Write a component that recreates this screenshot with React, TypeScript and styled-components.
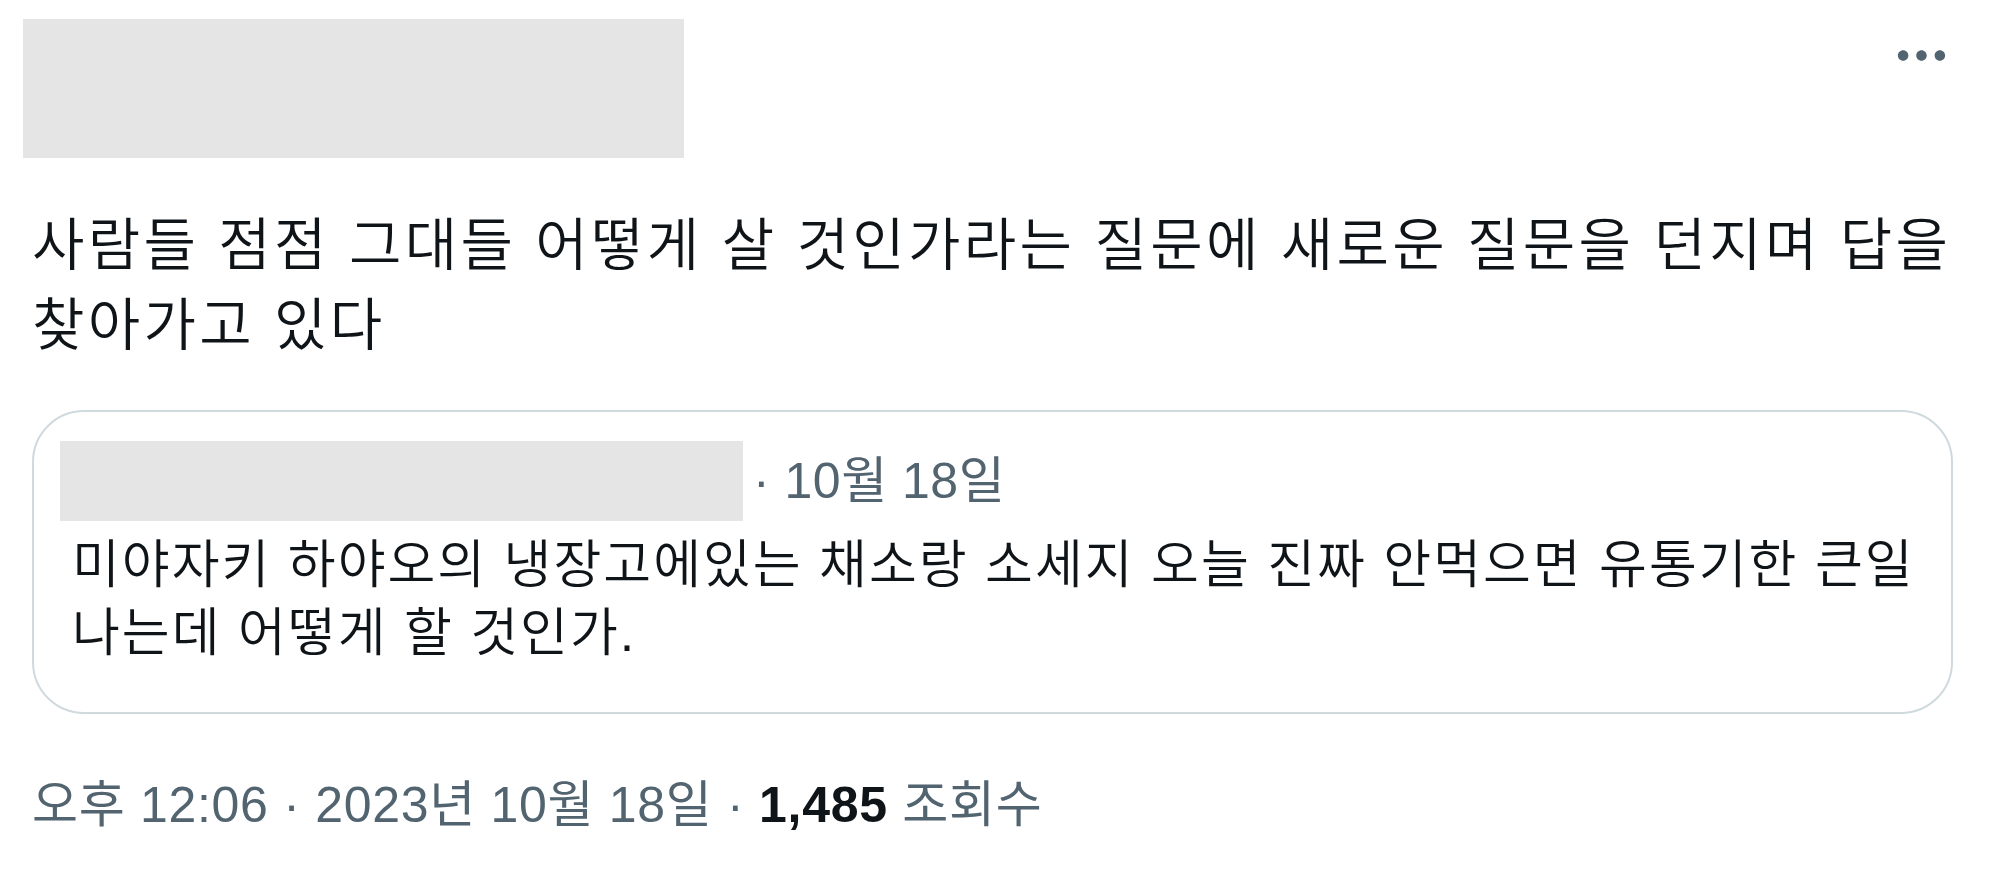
import React from "react";
import styled, { createGlobalStyle } from "styled-components";

const GlobalStyle = createGlobalStyle`
  html, body {
    margin: 0;
    padding: 0;
    background: #ffffff;
  }
  body {
    font-family: "Liberation Sans", "Noto Sans CJK KR", sans-serif;
    color: #0f1419;
  }
`;

const Tweet = styled.article`
  width: 2000px;
  box-sizing: border-box;
  padding: 19px 47px 0 23px;
  display: flex;
  flex-direction: column;
`;

const Header = styled.header`
  display: flex;
  justify-content: space-between;
  align-items: flex-start;
`;

const Redaction = styled.div<{ $w: number; $h: number }>`
  width: ${(p) => p.$w}px;
  height: ${(p) => p.$h}px;
  background: #e5e5e5;
  flex: none;
`;

const MoreButton = styled.button`
  width: 63px;
  height: 63px;
  margin-top: 5px;
  padding: 0;
  border: 0;
  background: transparent;
  color: #536471;
  display: flex;
  align-items: center;
  justify-content: center;
  svg {
    width: 63px;
    height: 63px;
    fill: currentColor;
  }
`;

const Body = styled.div`
  padding-left: 9px;
  display: flex;
  flex-direction: column;
`;

const MainText = styled.p`
  margin: 47px 0 0;
  font-size: 57px;
  font-weight: 350;
  line-height: 80px;
  letter-spacing: 3.3px;
  word-break: keep-all;
  color: #0f1419;
`;

const Quote = styled.div`
  margin-top: 45px;
  border: 2px solid #cfd9de;
  border-radius: 52px;
  padding: 29px 26px 45px;
  display: flex;
  flex-direction: column;
`;

const QuoteHeader = styled.div`
  display: flex;
  align-items: center;
  gap: 10px;
`;

const DateText = styled.span`
  font-size: 50px;
  line-height: 60px;
  letter-spacing: 0.5px;
  color: #536471;
  white-space: nowrap;
`;

const QuoteText = styled.p`
  margin: 10px 0 0 12px;
  font-size: 52px;
  font-weight: 350;
  line-height: 68px;
  letter-spacing: 2px;
  word-break: keep-all;
  color: #0f1419;
`;

const Meta = styled.div`
  margin-top: 58px;
  font-size: 50px;
  line-height: 66px;
  letter-spacing: 0.7px;
  color: #536471;
  white-space: nowrap;
`;

const Count = styled.span`
  font-weight: 700;
  color: #0f1419;
`;

export default function App() {
  return (
    <>
      <GlobalStyle />
      <Tweet>
        <Header>
          <Redaction $w={661} $h={139} />
          <MoreButton aria-label="더 보기">
            <svg viewBox="0 0 24 24" aria-hidden="true">
              <path d="M3 12c0-1.1.9-2 2-2s2 .9 2 2-.9 2-2 2-2-.9-2-2zm9 2c1.1 0 2-.9 2-2s-.9-2-2-2-2 .9-2 2 .9 2 2 2zm7 0c1.1 0 2-.9 2-2s-.9-2-2-2-2 .9-2 2 .9 2 2 2z" />
            </svg>
          </MoreButton>
        </Header>
        <Body>
          <MainText>
            사람들 점점 그대들 어떻게 살 것인가라는 질문에 새로운 질문을 던지며 답을 찾아가고 있다
          </MainText>
          <Quote>
            <QuoteHeader>
              <Redaction $w={683} $h={80} />
              <DateText>· 10월 18일</DateText>
            </QuoteHeader>
            <QuoteText>
              미야자키 하야오의 냉장고에있는 채소랑 소세지 오늘 진짜 안먹으면 유통기한 큰일 나는데 어떻게 할 것인가.
            </QuoteText>
          </Quote>
          <Meta>
            오후 12:06 · 2023년 10월 18일 · <Count>1,485</Count> 조회수
          </Meta>
        </Body>
      </Tweet>
    </>
  );
}
